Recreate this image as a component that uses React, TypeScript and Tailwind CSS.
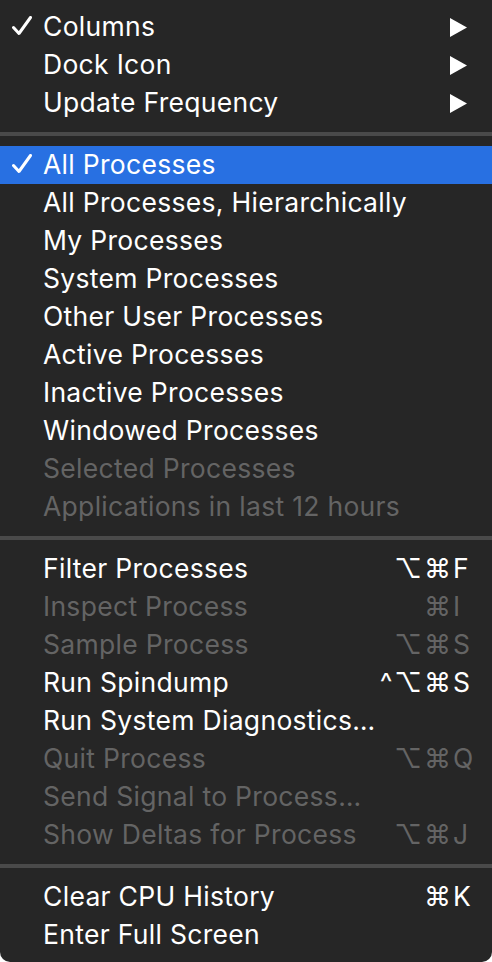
import React from 'react';

type Item =
  | { type: 'sep' }
  | {
      type?: 'item';
      label: string;
      checked?: boolean;
      submenu?: boolean;
      disabled?: boolean;
      active?: boolean;
      mods?: string;
      keyChar?: string;
    };

const items: Item[] = [
  { label: 'Columns', checked: true, submenu: true },
  { label: 'Dock Icon', submenu: true },
  { label: 'Update Frequency', submenu: true },
  { type: 'sep' },
  { label: 'All Processes', checked: true, active: true },
  { label: 'All Processes, Hierarchically' },
  { label: 'My Processes' },
  { label: 'System Processes' },
  { label: 'Other User Processes' },
  { label: 'Active Processes' },
  { label: 'Inactive Processes' },
  { label: 'Windowed Processes' },
  { label: 'Selected Processes', disabled: true },
  { label: 'Applications in last 12 hours', disabled: true },
  { type: 'sep' },
  { label: 'Filter Processes', mods: '⌥⌘', keyChar: 'F' },
  { label: 'Inspect Process', disabled: true, mods: '⌘', keyChar: 'I' },
  { label: 'Sample Process', disabled: true, mods: '⌥⌘', keyChar: 'S' },
  { label: 'Run Spindump', mods: '^⌥⌘', keyChar: 'S' },
  { label: 'Run System Diagnostics…' },
  { label: 'Quit Process', disabled: true, mods: '⌥⌘', keyChar: 'Q' },
  { label: 'Send Signal to Process…', disabled: true },
  { label: 'Show Deltas for Process', disabled: true, mods: '⌥⌘', keyChar: 'J' },
  { type: 'sep' },
  { label: 'Clear CPU History', mods: '⌘', keyChar: 'K' },
  { label: 'Enter Full Screen' },
];

const Check = () => (
  <svg width="20" height="20" viewBox="0 0 20 20" className="absolute left-[12px] top-[8px]">
    <path d="M1.5 11.5 L7 17.5 L18.5 1.5" fill="none" stroke="currentColor" strokeWidth="3" strokeLinecap="round" strokeLinejoin="round" />
  </svg>
);

const Arrow = () => (
  <svg width="17" height="19" viewBox="0 0 17 19" className="absolute left-[450px] top-[10px]">
    <path d="M0 0 L17 9.5 L0 19 Z" fill="currentColor" />
  </svg>
);

const App: React.FC = () => {
  return (
    <div className="w-[492px] h-[962px] bg-white">
      <div
        className="w-[492px] h-[962px] bg-[#262626] rounded-b-[10px] pt-[8px] pb-[8px] select-none"
        style={{ fontFamily: 'Inter, "DejaVu Sans", sans-serif' }}
      >
        {items.map((item, i) => {
          if (item.type === 'sep') {
            return (
              <div key={i} className="h-[24px] pt-[10px]">
                <div className="h-[4px] bg-[#4a4a4a]" />
              </div>
            );
          }
          const color = item.active
            ? 'bg-[#2870e2] text-white'
            : item.disabled
            ? 'text-[#646464]'
            : 'text-white';
          return (
            <div key={i} className={`relative h-[38px] flex items-center pb-[2px] ${color}`}>
              {item.checked && <Check />}
              <span className="pl-[43px] text-[26.5px] leading-none tracking-[0.3px]">{item.label}</span>
              {item.submenu && <Arrow />}
              {item.keyChar && (
                <div className="absolute right-0 top-0 h-[38px] pb-[2px] flex items-center leading-none">
                  <span className="text-[27px] tracking-[2px]">{item.mods}</span>
                  <span className="w-[39px] text-[26.5px]">{item.keyChar}</span>
                </div>
              )}
            </div>
          );
        })}
      </div>
    </div>
  );
};

export default App;
